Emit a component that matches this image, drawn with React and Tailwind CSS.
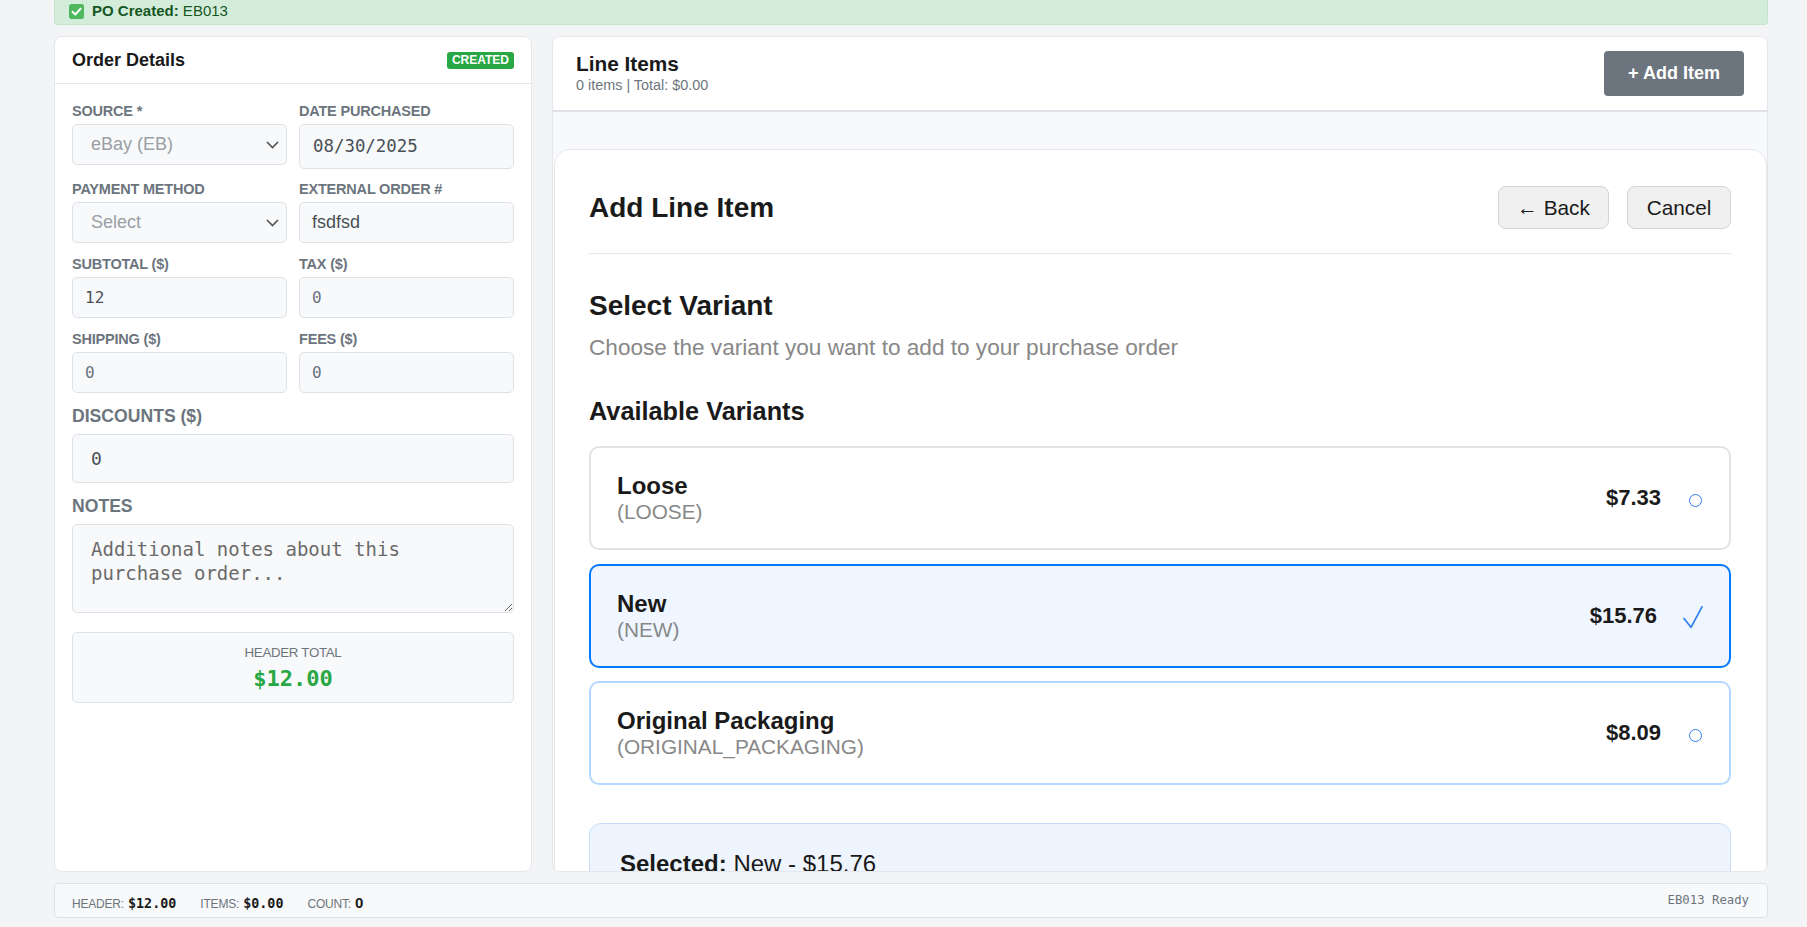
const sans = "font-['Liberation_Sans',Arial,sans-serif]";
const mono = "font-['DejaVu_Sans_Mono',monospace]";

function Chevron() {
  return (
    <svg width="13" height="8" viewBox="0 0 13 8">
      <path d="M1 1l5.5 5.5L12 1" stroke="#555" strokeWidth="1.7" fill="none" />
    </svg>
  );
}

function Label({ children, big }) {
  return big ? (
    <div className="text-[17.6px] leading-[21px] font-bold uppercase text-[#6c757d] mb-[7px]">{children}</div>
  ) : (
    <div className="text-[14.5px] leading-[18px] font-bold uppercase text-[#6c757d] mb-[4px] tracking-[-0.2px]">{children}</div>
  );
}

const box = "border border-[#dee2e6] bg-[#f8f9fa] rounded-[5px]";

function Variant({ name, code, price, state }) {
  const cls =
    state === "selected"
      ? "border-[#007bff] bg-[#eff6ff]"
      : state === "hover"
      ? "border-[#b3d7ff] bg-white"
      : "border-[#e3e3e3] bg-white";
  return (
    <div className={`h-[104px] rounded-[10px] border-2 ${cls} px-[26px] flex items-center justify-between`}>
      <div>
        <div className="text-[24px] leading-[27px] font-bold text-[#1a1a1a]">{name}</div>
        <div className="text-[20.8px] leading-[25px] text-[#888888]">{code}</div>
      </div>
      <div className="flex items-center">
        <div className="text-[22px] font-bold text-[#1a1a1a] leading-[26px]">{price}</div>
        {state === "selected" ? (
          <div className="ml-[26px] w-[20px] flex justify-center mt-[4px]">
            <svg width="20" height="23" viewBox="0 0 20 23">
              <path d="M1 12.5L8 21.3L19 0.8" stroke="#2f80ed" strokeWidth="1.7" fill="none" strokeLinecap="round" strokeLinejoin="round" />
            </svg>
          </div>
        ) : (
          <div className="ml-[27px] w-[15px] flex justify-center mt-[4px]">
            <span className="block w-[13px] h-[13px] rounded-full border-[1.5px] border-[#2f80ed]" />
          </div>
        )}
      </div>
    </div>
  );
}

export default function App() {
  return (
    <div className={`${sans} w-[1807px] h-[927px] overflow-hidden bg-[#f3f4f6] pl-[54px] pr-[39px] flex flex-col gap-[11px]`}>
      {/* banner */}
      <div className="h-[25px] shrink-0 bg-[#d4edda] border border-t-0 border-[#c3e6cb] rounded-b-[4px] flex items-center pl-[14px] gap-[8px] text-[15px] leading-[18px] text-[#155724] pb-[2px]">
        <svg width="15" height="15" viewBox="0 0 15 15">
          <rect x="0" y="0" width="15" height="15" rx="2.5" fill="#4fb85f" />
          <path d="M3.5 7.8L6.3 10.5L11.6 4.6" stroke="#fff" strokeWidth="1.9" fill="none" strokeLinecap="round" strokeLinejoin="round" />
        </svg>
        <div>
          <span className="font-bold">PO Created:</span> EB013
        </div>
      </div>

      {/* main */}
      <div className="flex gap-[20px] h-[836px] shrink-0">
        {/* left card */}
        <div className="w-[478px] shrink-0 bg-white border border-[#e5e7eb] rounded-[8px] flex flex-col">
          <div className="h-[47px] shrink-0 border-b border-[#e5e7eb] flex items-center justify-between px-[17px]">
            <div className="text-[18px] font-bold text-[#1a1a1a]">Order Details</div>
            <div className="h-[17px] px-[5px] bg-[#28a745] text-white text-[12px] font-bold leading-[17px] rounded-[3px]">CREATED</div>
          </div>
          <div className="px-[17px] pt-[18px]">
            <div className="grid grid-cols-2 gap-x-[12px] items-start">
              <div>
                <Label>Source *</Label>
                <div className={`${box} h-[41px] flex items-center justify-between pl-[18px] pr-[7px] text-[18px] text-[#9aa0a6]`}>
                  <span>eBay (EB)</span>
                  <Chevron />
                </div>
              </div>
              <div>
                <Label>Date Purchased</Label>
                <div className={`${box} h-[45px] flex items-center pl-[13px] ${mono} text-[17.4px] text-[#495057]`}>08/30/2025</div>
              </div>
            </div>
            <div className="grid grid-cols-2 gap-x-[12px] items-start mt-[11px]">
              <div>
                <Label>Payment Method</Label>
                <div className={`${box} h-[41px] flex items-center justify-between pl-[18px] pr-[7px] text-[18px] text-[#9aa0a6]`}>
                  <span>Select</span>
                  <Chevron />
                </div>
              </div>
              <div>
                <Label>External Order #</Label>
                <div className={`${box} h-[41px] flex items-center pl-[12px] text-[18px] text-[#495057]`}>fsdfsd</div>
              </div>
            </div>
            <div className="grid grid-cols-2 gap-x-[12px] items-start mt-[12px]">
              <div>
                <Label>Subtotal ($)</Label>
                <div className={`${box} h-[41px] flex items-center pl-[12px] ${mono} text-[16px] text-[#495057]`}>12</div>
              </div>
              <div>
                <Label>Tax ($)</Label>
                <div className={`${box} h-[41px] flex items-center pl-[12px] ${mono} text-[16px] text-[#6b7280]`}>0</div>
              </div>
            </div>
            <div className="grid grid-cols-2 gap-x-[12px] items-start mt-[12px]">
              <div>
                <Label>Shipping ($)</Label>
                <div className={`${box} h-[41px] flex items-center pl-[12px] ${mono} text-[16px] text-[#6b7280]`}>0</div>
              </div>
              <div>
                <Label>Fees ($)</Label>
                <div className={`${box} h-[41px] flex items-center pl-[12px] ${mono} text-[16px] text-[#6b7280]`}>0</div>
              </div>
            </div>
            <div className="mt-[13px]">
              <Label big>Discounts ($)</Label>
              <div className={`${box} h-[49px] flex items-center pl-[18px] ${mono} text-[18px] text-[#495057]`}>0</div>
            </div>
            <div className="mt-[13px]">
              <Label big>Notes</Label>
              <textarea
                readOnly
                placeholder="Additional notes about this purchase order..."
                className={`${box} block w-full h-[89px] pl-[18px] pr-[12px] pt-[12px] ${mono} text-[19px] leading-[24px] text-[#495057] placeholder:text-[#6b6b6b] outline-none`}
              />
            </div>
            <div className={`${box} mt-[19px] h-[71px] text-center pt-[12px]`}>
              <div className="text-[13.3px] leading-[16px] text-[#6c757d] tracking-[-0.3px]">HEADER TOTAL</div>
              <div className={`mt-[5px] text-[22px] leading-[26px] font-bold ${mono} text-[#28a745]`}>$12.00</div>
            </div>
          </div>
        </div>

        {/* right panel */}
        <div className="flex-1 min-w-0 bg-[#f8f9fa] border border-[#e5e7eb] rounded-[8px] overflow-hidden flex flex-col">
          <div className="h-[75px] shrink-0 bg-white border-b-2 border-[#dee2e6] flex items-center justify-between px-[23px]">
            <div className="-mt-[1px]">
              <div className="text-[20.8px] leading-[24px] font-bold text-[#1a1a1a]">Line Items</div>
              <div className="text-[14.4px] leading-[18px] text-[#6c757d]">0 items | Total: $0.00</div>
            </div>
            <div className="h-[45px] w-[140px] bg-[#6c757d] rounded-[4px] text-white text-[18px] font-bold flex items-center justify-center">+ Add Item</div>
          </div>
          <div className="pt-[37px] pl-[1px] flex-1 min-h-0">
            <div className="bg-white border border-[#e5e7eb] rounded-t-[16px] pl-[34px] pr-[35px] pt-[36px] h-[800px]">
              <div className="flex items-center justify-between pb-[24px] border-b border-[#e5e7eb]">
                <div className="text-[28px] leading-[34px] font-bold text-[#1a1a1a]">Add Line Item</div>
                <div className="flex gap-[18px]">
                  <div className="h-[43px] w-[111px] border border-[#d4d4d4] bg-[#f0f0f0] rounded-[8px] text-[20.8px] text-[#1a1a1a] flex items-center justify-center">← Back</div>
                  <div className="h-[43px] w-[104px] border border-[#d4d4d4] bg-[#f0f0f0] rounded-[8px] text-[20.8px] text-[#1a1a1a] flex items-center justify-center">Cancel</div>
                </div>
              </div>
              <div className="mt-[35px] text-[28px] leading-[34px] font-bold text-[#1a1a1a]">Select Variant</div>
              <div className="mt-[11px] text-[22.6px] leading-[28px] text-[#888888]">Choose the variant you want to add to your purchase order</div>
              <div className="mt-[34px] text-[25.3px] leading-[30px] font-bold text-[#1a1a1a]">Available Variants</div>
              <div className="mt-[20px] flex flex-col gap-[13.5px]">
                <Variant name="Loose" code="(LOOSE)" price="$7.33" state="normal" />
                <Variant name="New" code="(NEW)" price="$15.76" state="selected" />
                <Variant name="Original Packaging" code="(ORIGINAL_PACKAGING)" price="$8.09" state="hover" />
              </div>
              <div className="mt-[38px] h-[120px] border border-[#c6dcf7] bg-[#eef5fe] rounded-[12px] pt-[26px] px-[30px] text-[24px] leading-[28px] text-[#1a1a1a]">
                <span className="font-bold">Selected:</span> New - $15.76
              </div>
            </div>
          </div>
        </div>
      </div>

      {/* footer */}
      <div className="h-[35px] shrink-0 border border-[#dee2e6] rounded-[4px] bg-[#f8f9fa] pl-[17px] pr-[18px] flex items-center justify-between">
        <div className="flex items-baseline gap-[24px] pt-[5px]">
          <div className="flex items-baseline gap-[4px]">
            <span className="text-[12px] text-[#6c757d] tracking-[-0.2px]">HEADER:</span>
            <span className={`${mono} text-[13.4px] font-bold text-[#1a1a1a]`}>$12.00</span>
          </div>
          <div className="flex items-baseline gap-[4px]">
            <span className="text-[12px] text-[#6c757d] tracking-[-0.2px]">ITEMS:</span>
            <span className={`${mono} text-[13.4px] font-bold text-[#1a1a1a]`}>$0.00</span>
          </div>
          <div className="flex items-baseline gap-[4px]">
            <span className="text-[12px] text-[#6c757d] tracking-[-0.2px]">COUNT:</span>
            <span className="text-[15px] font-bold text-[#1a1a1a]">0</span>
          </div>
        </div>
        <div className={`${mono} text-[12.3px] text-[#6c757d]`}>EB013 Ready</div>
      </div>
    </div>
  );
}
